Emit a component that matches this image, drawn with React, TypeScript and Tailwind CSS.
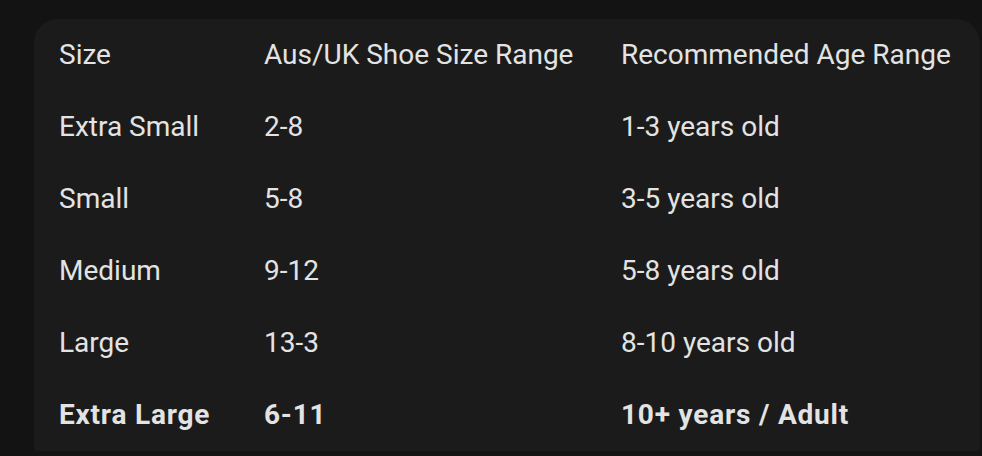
const rows = [
  { size: "Extra Small", shoe: "2-8", age: "1-3 years old" },
  { size: "Small", shoe: "5-8", age: "3-5 years old" },
  { size: "Medium", shoe: "9-12", age: "5-8 years old" },
  { size: "Large", shoe: "13-3", age: "8-10 years old" },
  { size: "Extra Large", shoe: "6-11", age: "10+ years / Adult", bold: true },
];

export default function App() {
  return (
    <div className="h-[456px] w-[982px] overflow-hidden bg-[#131313] pt-[19px] pl-[34px] pr-[2px] font-['Roboto',sans-serif] text-[#e3e3e3]">
      <div className="h-[432px] rounded-t-[24px] rounded-b-[4px] bg-[#1b1b1b] pl-[25px]">
        <div className="grid h-[72px] grid-cols-[205px_357px_1fr] items-center text-[28px]">
          <span>Size</span>
          <span>Aus/UK Shoe Size Range</span>
          <span>Recommended Age Range</span>
        </div>
        {rows.map((r) => (
          <div
            key={r.size}
            className={`grid h-[72px] grid-cols-[205px_357px_1fr] items-center text-[28px] ${r.bold ? "font-bold tracking-[0.8px]" : ""}`}
          >
            <span>{r.size}</span>
            <span>{r.shoe}</span>
            <span>{r.age}</span>
          </div>
        ))}
      </div>
    </div>
  );
}
